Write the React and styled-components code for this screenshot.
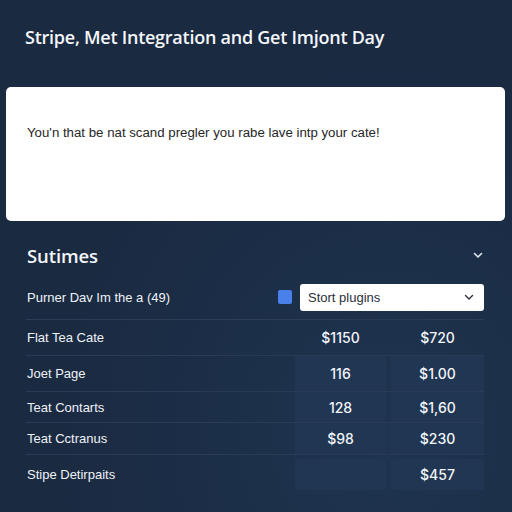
import styled, { createGlobalStyle } from "styled-components";

const GlobalStyle = createGlobalStyle`
  html, body {
    margin: 0;
    padding: 0;
    background: #1a2a41;
  }
  body {
    font-family: "Liberation Sans", Arial, sans-serif;
    color: #ffffff;
  }
`;

const Page = styled.div`
  width: 512px;
  height: 512px;
  overflow: hidden;
  background: radial-gradient(ellipse at 75% 85%, #1e3450 0%, #1a2a41 60%);
  box-sizing: border-box;
  padding-top: 26px;
`;

const Title = styled.h1`
  margin: 0 0 0 25px;
  font-family: "Open Sans", sans-serif;
  font-weight: 600;
  font-size: 18px;
  letter-spacing: -0.25px;
  line-height: 22px;
  color: #f4f6fa;
`;

const Card = styled.div`
  margin: 39px 7px 0 6px;
  height: 134px;
  background: #ffffff;
  border-radius: 5px;
  box-sizing: border-box;
  padding: 38px 21px 0;
  color: #262626;
  font-size: 13.25px;
  line-height: 16px;
`;

const Section = styled.div`
  padding: 0 28px 0 26px;
`;

const SectionHead = styled.div`
  display: flex;
  align-items: center;
  justify-content: space-between;
  height: 28px;
  margin-top: 20px;
`;

const SectionTitle = styled.h2`
  margin: 0 0 0 1px;
  font-family: "Open Sans", sans-serif;
  font-weight: 600;
  font-size: 18.5px;
  letter-spacing: -0.1px;
  color: #f4f6fa;
`;

const Chevron = ({ color = "#dfe6f0", size = 12, width = 1.6 }) => (
  <svg width={size} height={size} viewBox="0 0 12 12" fill="none">
    <path d="M2.5 4.5 L6 8 L9.5 4.5" stroke={color} strokeWidth={width} strokeLinecap="round" strokeLinejoin="round" />
  </svg>
);

const FilterRow = styled.div`
  display: flex;
  align-items: center;
  height: 28px;
  margin-top: 14px;
  padding-bottom: 8px;
  border-bottom: 1px solid #2c3d55;
  font-size: 13px;
`;

const FilterLabel = styled.span`
  flex: 1;
  padding-left: 1px;
  color: #eef2f7;
`;

const Swatch = styled.span`
  width: 14px;
  height: 14px;
  border-radius: 2px;
  background: #4a80ea;
  margin-right: 8px;
`;

const Select = styled.div`
  width: 184px;
  height: 27px;
  background: #ffffff;
  border-radius: 3px;
  display: flex;
  align-items: center;
  justify-content: space-between;
  box-sizing: border-box;
  padding: 0 9px 0 8px;
  color: #2a2f38;
  font-size: 13px;
`;

const Table = styled.div`
  display: flex;
  flex-direction: column;
`;

const Row = styled.div`
  display: grid;
  grid-template-columns: 1fr 91px 93px;
  column-gap: 5px;
  box-sizing: border-box;
  height: ${(p) => p.h}px;
  border-bottom: ${(p) => (p.last ? "none" : "1px solid #2a3c55")};
  margin-top: ${(p) => (p.last ? "4px" : "0")};
  font-size: 13px;
`;

const Label = styled.div`
  display: flex;
  align-items: center;
  padding-left: 1px;
  color: #eef2f7;
`;

const Value = styled.div`
  display: flex;
  align-items: center;
  justify-content: center;
  color: #f2f5f9;
  font-family: Inter, sans-serif;
  font-weight: 500;
  font-size: 14px;
  background: ${(p) => (p.filled ? "#203652" : "transparent")};
  border-radius: ${(p) => (p.rounded ? "3px" : "0")};
`;

const rows = [
  { label: "Joet Page", a: "116", b: "$1.00", h: 36 },
  { label: "Teat Contarts", a: "128", b: "$1,60", h: 31 },
  { label: "Teat Cctranus", a: "$98", b: "$230", h: 32 },
];

export default function App() {
  return (
    <Page>
      <GlobalStyle />
      <Title>Stripe, Met Integration and Get Imjont Day</Title>
      <Card>You'n that be nat scand pregler you rabe lave intp your cate!</Card>
      <Section>
        <SectionHead>
          <SectionTitle>Sutimes</SectionTitle>
          <Chevron />
        </SectionHead>
        <FilterRow>
          <FilterLabel>Purner Dav Im the a (49)</FilterLabel>
          <Swatch />
          <Select>
            Stort plugins
            <Chevron color="#2a2f38" width={1.4} />
          </Select>
        </FilterRow>
        <Table>
          <Row h={36}>
            <Label>Flat Tea Cate</Label>
            <Value>$1150</Value>
            <Value>$720</Value>
          </Row>
          {rows.map((r) => (
            <Row key={r.label} h={r.h}>
              <Label>{r.label}</Label>
              <Value filled>{r.a}</Value>
              <Value filled>{r.b}</Value>
            </Row>
          ))}
          <Row h={31} last>
            <Label>Stipe Detirpaits</Label>
            <Value filled rounded></Value>
            <Value filled rounded>$457</Value>
          </Row>
        </Table>
      </Section>
    </Page>
  );
}
